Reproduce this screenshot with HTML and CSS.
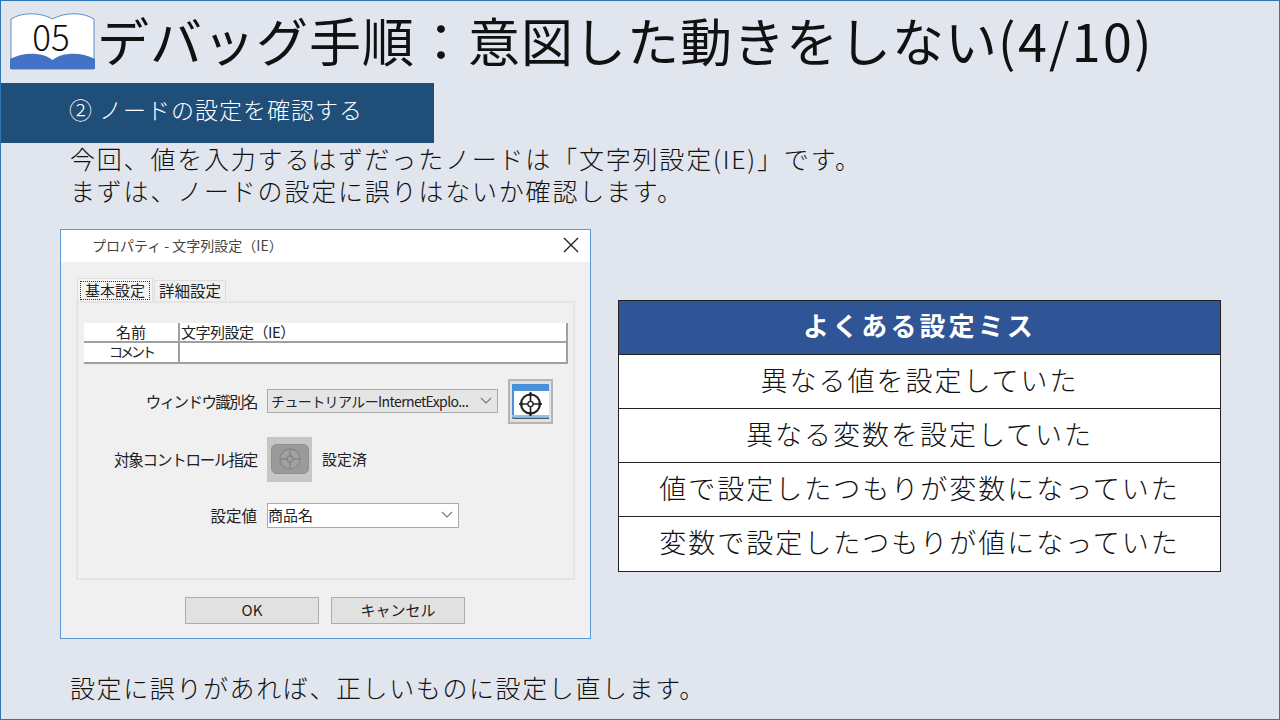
FILE: index.html
```html
<!DOCTYPE html>
<html lang="ja">
<head>
<meta charset="utf-8">
<title>デバッグ手順</title>
<link rel="stylesheet" href="styles.css">
</head>
<body>
<div class="slide">
  <header class="head">
    <div class="book">
      <svg class="book-art" viewBox="0 0 85 57" width="85" height="57">
        <path d="M1 6 C12 -1 30 -1 42.5 6 C55 -1 73 -1 84 6 L84 56 L1 56 Z" fill="#fff" stroke="#5b8fc4" stroke-width="1"/>
        <path d="M0 46 C14 39 32 39 42.5 47 C53 39 71 39 85 46 L85 56 L0 56 Z" fill="#4472c4"/>
      </svg>
      <span class="book-num">05</span>
    </div>
    <h1 class="title">デバッグ手順：意図した動きをしない<span class="title-num">(4/10)</span></h1>
  </header>
  <div class="section">② ノードの設定を確認する</div>
  <div class="intro">
    <p>今回、値を入力するはずだったノードは「文字列設定(IE)」です。</p>
    <p>まずは、ノードの設定に誤りはないか確認します。</p>
  </div>
  <main class="content">
    <div class="dialog">
      <div class="dlg-title">
        <span>プロパティ - 文字列設定（IE）</span>
        <svg class="dlg-close" viewBox="0 0 16 16" width="16" height="16"><path d="M1 1 L15 15 M15 1 L1 15" stroke="#222" stroke-width="1.4" fill="none"/></svg>
      </div>
      <div class="dlg-body">
        <div class="tabs">
          <span class="tab tab-on"><span class="tab-focus">基本設定</span></span>
          <span class="tab">詳細設定</span>
        </div>
        <div class="panel">
          <div class="grid">
            <div class="g-head g-top">名前</div><div class="g-val g-top">文字列設定（IE）</div>
            <div class="g-head g-kana">コメント</div><div class="g-val"></div>
          </div>
          <div class="form-row row-window">
            <span class="lbl lbl-kana">ウィンドウ識別名</span>
            <div class="combo combo-grey"><span class="combo-tight">チュートリアルーInternetExplo...</span>
              <svg class="chev" viewBox="0 0 12 7" width="12" height="7"><path d="M1 1 L6 6 L11 1" stroke="#777" stroke-width="1.1" fill="none"/></svg>
            </div>
            <div class="icon-btn">
              <svg viewBox="0 0 37 35" width="37" height="35">
                <rect x="0" y="0" width="37" height="35" fill="#fff"/>
                <rect x="0" y="0" width="37" height="7" fill="#4a90d9"/>
                <rect x="0" y="0" width="2" height="35" fill="#4a90d9"/>
                <rect x="0" y="31" width="37" height="2" fill="#8cc4f0"/>
                <rect x="2" y="33.5" width="35" height="1.5" fill="#555"/>
                <circle cx="18.5" cy="20" r="9.5" fill="none" stroke="#222" stroke-width="2"/>
                <circle cx="18.5" cy="20" r="2.6" fill="none" stroke="#222" stroke-width="1.4"/>
                <path d="M18.5 8 V17 M18.5 23 V32 M7 20 H16 M21 20 H30" stroke="#222" stroke-width="1.7"/>
                <path d="M15.5 11.5 L18.5 8 L21.5 11.5 Z M15.5 28.5 L18.5 32 L21.5 28.5 Z M10.5 17 L7 20 L10.5 23 Z M26.5 17 L30 20 L26.5 23 Z" fill="#222"/>
              </svg>
            </div>
          </div>
          <div class="form-row row-target">
            <span class="lbl lbl-mixed">対象コントロール指定</span>
            <div class="target-btn">
              <svg viewBox="0 0 38 30" width="38" height="30">
                <rect x="0.5" y="0.5" width="37" height="29" rx="5" fill="#9a9a9a" stroke="#8f8f8f"/>
                <circle cx="19" cy="15" r="10" fill="#a2a2a2" stroke="#8a8a8a" stroke-width="1.4"/>
                <circle cx="19" cy="15" r="3" fill="none" stroke="#858585" stroke-width="1.3"/>
                <path d="M19 5 V12 M19 18 V25 M9 15 H16 M22 15 H29" stroke="#858585" stroke-width="1.4"/>
              </svg>
            </div>
            <span class="done">設定済</span>
          </div>
          <div class="form-row row-value">
            <span class="lbl">設定値</span>
            <div class="combo combo-white"><span>商品名</span>
              <svg class="chev" viewBox="0 0 12 7" width="12" height="7"><path d="M1 1 L6 6 L11 1" stroke="#777" stroke-width="1.1" fill="none"/></svg>
            </div>
          </div>
        </div>
        <div class="actions">
          <div class="btn">OK</div>
          <div class="btn">キャンセル</div>
        </div>
      </div>
    </div>
    <table class="mistakes">
      <thead><tr><th>よくある設定ミス</th></tr></thead>
      <tbody>
        <tr><td>異なる値を設定していた</td></tr>
        <tr><td>異なる変数を設定していた</td></tr>
        <tr><td>値で設定したつもりが変数になっていた</td></tr>
        <tr><td>変数で設定したつもりが値になっていた</td></tr>
      </tbody>
    </table>
  </main>
  <p class="foot">設定に誤りがあれば、正しいものに設定し直します。</p>
</div>
</body>
</html>
```
FILE: styles.css
```css
* { box-sizing: border-box; margin: 0; padding: 0; }
html, body { width: 1280px; height: 720px; overflow: hidden; }
body { font-family: "Noto Sans CJK JP", "Noto Sans", sans-serif; }
.slide {
  width: 1280px; height: 720px;
  background: #e1e5ee;
  border: 1px solid #2e75b6;
  display: flex; flex-direction: column;
  color: #111;
}
.head { display: flex; align-items: flex-start; height: 82px; padding: 12px 0 0 9px; gap: 2px; }
.book { position: relative; width: 85px; height: 57px; flex: none; }
.book-art { display: block; }
.book-num { position: absolute; left: 0; right: 3px; top: 0; text-align: center; font-size: 35px; font-weight: 300; line-height: 46px; color: #111; }
.title { font-size: 52px; font-weight: 400; letter-spacing: 1px; line-height: 60px; white-space: nowrap; margin-top: -3px; }
.title-num { letter-spacing: 2.3px; }
.section {
  width: 433px; height: 60px; background: #1f4e79; color: #fff;
  font-size: 23px; font-weight: 300; letter-spacing: 1px; line-height: 52px; padding-left: 68px;
}
.intro { padding: 0 0 0 69px; font-size: 25px; font-weight: 300; letter-spacing: 1.8px; line-height: 32px; height: 87px; margin-top: -1px; }
.content { display: flex; align-items: flex-start; height: 410px; padding-left: 59px; }
.dialog { width: 531px; height: 410px; border: 1px solid #5b9bd5; background: #f0f0f0; display: flex; flex-direction: column; font-size: 15px; color: #222; }
.dlg-title { height: 32px; background: #fff; display: flex; align-items: center; justify-content: space-between; padding: 0 11px 2px 31px; font-size: 14px; color: #444; }
.dlg-body { flex: 1; padding: 16px 15px 0; display: flex; flex-direction: column; }
.tabs { display: flex; height: 23px; align-items: flex-end; }
.tab { height: 21px; padding: 0 4px; background: #f0f0f0; border: 1px solid #ddd; border-bottom: 0; font-size: 15.5px; line-height: 19px; }
.tab-on { height: 23px; padding: 2px; background: #f5f5f5; margin-right: 1px; margin-left: 1px; font-size: 15px; }
.tab-focus { display: block; border: 1px dotted #333; line-height: 16px; padding: 0 4px; height: 19px; }
.panel { height: 279px; border: 2px solid #e4e4e4; background: #f0f0f0; padding: 20px 6px 0; display: flex; flex-direction: column; }
.grid { display: grid; grid-template-columns: 96px 1fr; width: 484px; height: 41px; background: #fff; border-right: 2px solid #a0a0a0; border-bottom: 2px solid #a0a0a0; font-size: 15px; }
.g-head, .g-val { height: 20px; line-height: 17px; }
.g-head { text-align: center; border-right: 2px solid #a0a0a0; }
.g-kana { font-size: 14px; letter-spacing: -3px; }
.g-val { padding-left: 1px; letter-spacing: -0.5px; }
.g-top { border-bottom: 2px solid #a0a0a0; }
.form-row { display: flex; align-items: center; }
.lbl { width: 173px; text-align: right; flex: none; font-size: 15.5px; margin-right: 10px; line-height: 18px; padding-bottom: 1px; white-space: nowrap; }
.lbl-kana { letter-spacing: -1.6px; }
.lbl-mixed { letter-spacing: -1.2px; }
.row-window { margin-top: 14px; height: 46px; }
.row-target { margin-top: 12px; height: 46px; }
.row-value { margin-top: 20px; height: 26px; }
.combo { display: flex; align-items: center; justify-content: space-between; height: 24px; border: 1px solid #aaa; font-size: 15px; line-height: 18px; padding: 0 5px 1px 3px; white-space: nowrap; overflow: hidden; }
.combo-tight { font-size: 14px; letter-spacing: -0.6px; }
.combo-grey { width: 231px; background: #e5e5e5; }
.combo-white { width: 192px; height: 25px; background: #fff; padding-left: 0; }
.chev { flex: none; }
.icon-btn { width: 45px; height: 45px; margin-left: 10px; background: #e0e0e0; border: 2px solid #b5b5b5; display: flex; align-items: center; justify-content: center; flex: none; }
.target-btn { width: 45px; height: 45px; background: #c6c6c6; display: flex; align-items: center; justify-content: center; flex: none; }
.done { margin-left: 10px; font-size: 15px; line-height: 18px; padding-bottom: 1px; }
.actions { display: flex; gap: 12px; padding: 17px 0 0 109px; }
.btn { width: 134px; height: 27px; background: #e1e1e1; border: 1px solid #adadad; text-align: center; font-size: 15px; line-height: 23px; }
.mistakes { margin: 71px 0 0 27px; width: 603px; height: 272px; border-collapse: collapse; background: #fff; table-layout: fixed; }
.mistakes th, .mistakes td { border: 1px solid #222; text-align: center; height: 54px; padding: 0 0 4px; line-height: 40px; vertical-align: middle; white-space: nowrap; }
.mistakes tbody tr:last-child td { height: 55px; }
.mistakes th { background: #2f5597; color: #fff; font-size: 26px; font-weight: 700; letter-spacing: 3.1px; padding-bottom: 6px; }
.mistakes td { font-size: 27px; font-weight: 300; letter-spacing: 2px; color: #111; }
.foot { padding: 32px 0 0 69px; font-size: 25px; font-weight: 300; letter-spacing: 1.6px; line-height: 32px; }
```
